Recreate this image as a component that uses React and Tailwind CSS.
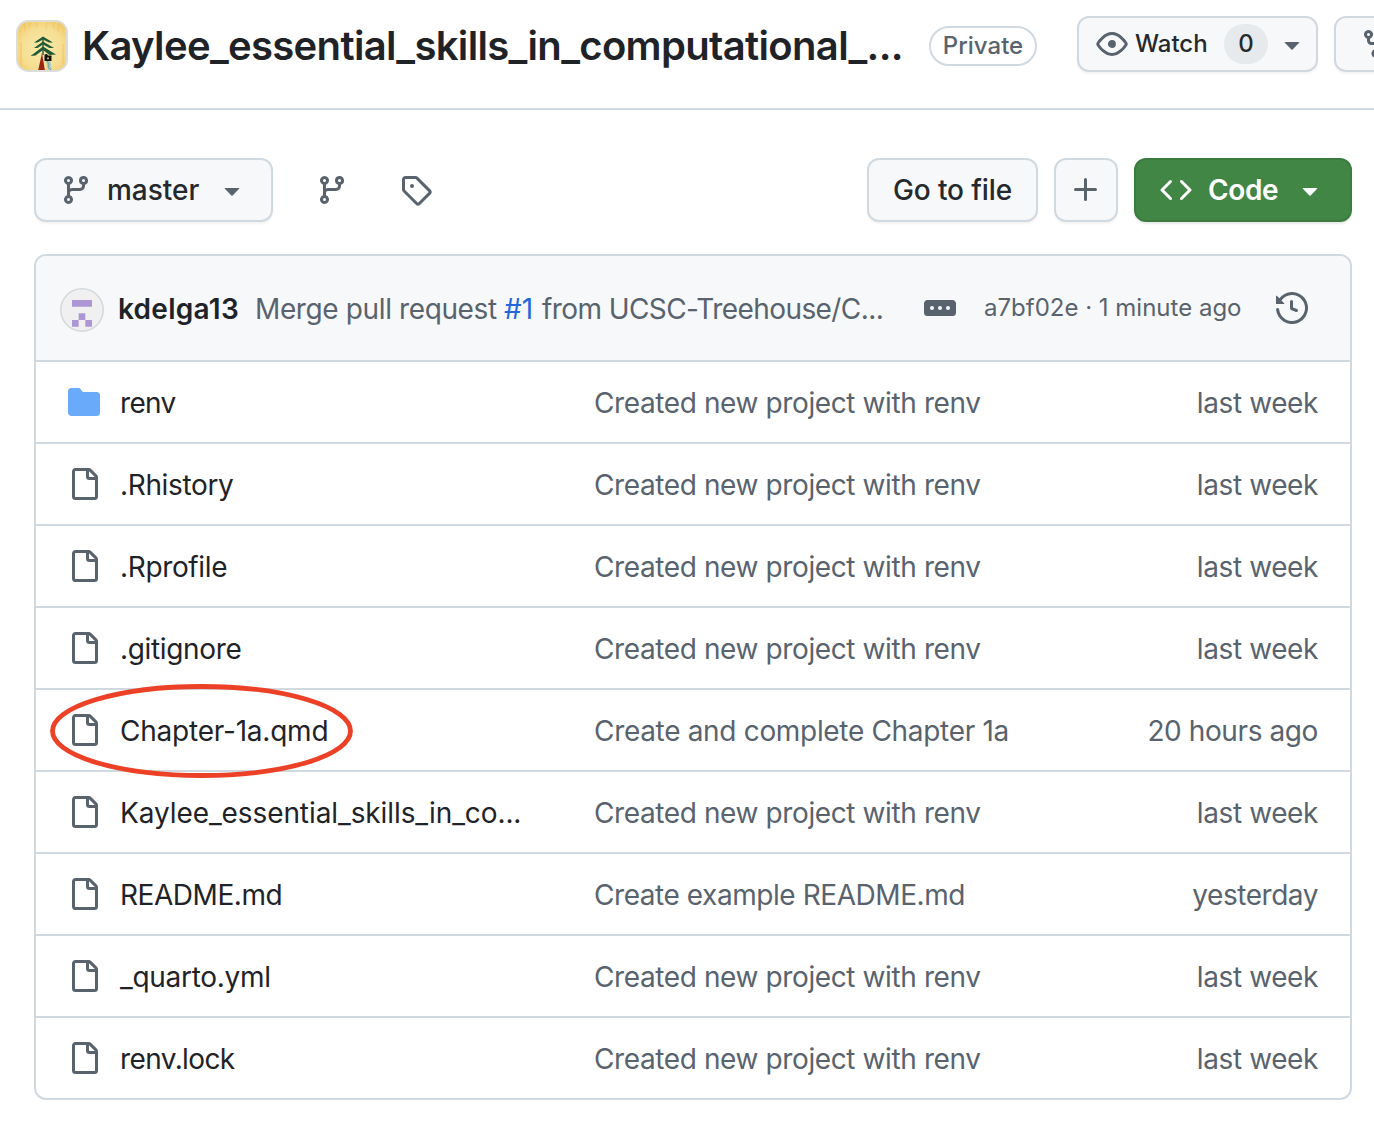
import React from "react";

const PATHS = {
  eye: "M8 2c1.981 0 3.671.992 4.933 2.078 1.27 1.091 2.187 2.345 2.637 3.023a1.62 1.62 0 0 1 0 1.798c-.45.678-1.367 1.932-2.637 3.023C11.67 13.008 9.981 14 8 14c-1.981 0-3.671-.992-4.933-2.078C1.797 10.83.88 9.576.43 8.898a1.62 1.62 0 0 1 0-1.798c.45-.677 1.367-1.931 2.637-3.022C4.33 2.992 6.019 2 8 2ZM1.679 7.932a.12.12 0 0 0 0 .136c.411.622 1.241 1.75 2.366 2.717C5.176 11.758 6.527 12.5 8 12.5c1.473 0 2.825-.742 3.955-1.715 1.124-.967 1.954-2.096 2.366-2.717a.12.12 0 0 0 0-.136c-.412-.621-1.242-1.75-2.366-2.717C10.824 4.242 9.473 3.5 8 3.5c-1.473 0-2.825.742-3.955 1.715-1.124.967-1.954 2.096-2.366 2.717ZM8 10a2 2 0 1 1-.001-3.999A2 2 0 0 1 8 10Z",
  branch: "M9.5 3.25a2.25 2.25 0 1 1 3 2.122V6A2.5 2.5 0 0 1 10 8.5H6a1 1 0 0 0-1 1v1.128a2.251 2.251 0 1 1-1.5 0V5.372a2.25 2.25 0 1 1 1.5 0v1.836A2.493 2.493 0 0 1 6 7h4a1 1 0 0 0 1-1v-.628A2.25 2.25 0 0 1 9.5 3.25Zm-6 0a.75.75 0 1 0 1.5 0 .75.75 0 0 0-1.5 0Zm8.25-.75a.75.75 0 1 0 0 1.5.75.75 0 0 0 0-1.5ZM4.25 12a.75.75 0 1 0 0 1.5.75.75 0 0 0 0-1.5Z",
  tag: "M1 7.775V2.75C1 1.784 1.784 1 2.75 1h5.025c.464 0 .91.184 1.238.513l6.25 6.25a1.75 1.75 0 0 1 0 2.474l-5.026 5.026a1.75 1.75 0 0 1-2.474 0l-6.25-6.25A1.752 1.752 0 0 1 1 7.775Zm1.5 0c0 .066.026.13.073.177l6.25 6.25a.25.25 0 0 0 .354 0l5.025-5.025a.25.25 0 0 0 0-.354l-6.25-6.25a.25.25 0 0 0-.177-.073H2.75a.25.25 0 0 0-.25.25ZM6 5a1 1 0 1 1 0 2 1 1 0 0 1 0-2Z",
  plus: "M7.75 2a.75.75 0 0 1 .75.75V7h4.25a.75.75 0 0 1 0 1.5H8.5v4.25a.75.75 0 0 1-1.5 0V8.5H2.75a.75.75 0 0 1 0-1.5H7V2.75A.75.75 0 0 1 7.75 2Z",
  code: "m11.28 3.22 4.25 4.25a.75.75 0 0 1 0 1.06l-4.25 4.25a.749.749 0 0 1-1.275-.326.749.749 0 0 1 .215-.734L13.94 8l-3.72-3.72a.749.749 0 0 1 .326-1.275.749.749 0 0 1 .734.215Zm-6.56 0a.751.751 0 0 1 1.042.018.751.751 0 0 1 .018 1.042L2.06 8l3.72 3.72a.749.749 0 0 1-.326 1.275.749.749 0 0 1-.734-.215L.47 8.53a.75.75 0 0 1 0-1.06Z",
  triangle: "m4.427 7.427 3.396 3.396a.25.25 0 0 0 .354 0l3.396-3.396A.25.25 0 0 0 11.396 7H4.604a.25.25 0 0 0-.177.427Z",
  history: "m.427 1.927 1.215 1.215a8.002 8.002 0 1 1-1.6 5.685.75.75 0 1 1 1.493-.154 6.5 6.5 0 1 0 1.18-4.458l1.358 1.358A.25.25 0 0 1 3.896 6H.25A.25.25 0 0 1 0 5.75V2.104a.25.25 0 0 1 .427-.177ZM7.75 4a.75.75 0 0 1 .75.75v2.992l2.028.812a.75.75 0 0 1-.557 1.392l-2.5-1A.751.751 0 0 1 7 8.25v-3.5A.75.75 0 0 1 7.75 4Z",
  file: "M2 1.75C2 .784 2.784 0 3.75 0h6.586c.464 0 .909.184 1.237.513l2.914 2.914c.329.328.513.773.513 1.237v9.586A1.75 1.75 0 0 1 13.25 16h-9.5A1.75 1.75 0 0 1 2 14.25Zm1.75-.25a.25.25 0 0 0-.25.25v12.5c0 .138.112.25.25.25h9.5a.25.25 0 0 0 .25-.25V6h-2.75A1.75 1.75 0 0 1 9 4.25V1.5Zm6.75.062V4.25c0 .138.112.25.25.25h2.688l-.011-.013-2.914-2.914-.013-.011Z",
  folder: "M1.75 1A1.75 1.75 0 0 0 0 2.75v10.5C0 14.216.784 15 1.75 15h12.5A1.75 1.75 0 0 0 16 13.25v-8.5A1.75 1.75 0 0 0 14.25 3H7.5a.25.25 0 0 1-.2-.1l-.9-1.2C6.07 1.26 5.55 1 5 1H1.75Z",
  ellipsis: "M0 5.75C0 4.784.784 4 1.75 4h12.5c.966 0 1.75.784 1.75 1.75v4.5A1.75 1.75 0 0 1 14.25 12H1.75A1.75 1.75 0 0 1 0 10.25ZM12 7a1 1 0 1 0 0 2 1 1 0 0 0 0-2ZM7 8a1 1 0 1 0 2 0 1 1 0 0 0-2 0ZM4 7a1 1 0 1 0 0 2 1 1 0 0 0 0-2Z",
  fork: "M5 5.372v.878c0 .414.336.75.75.75h4.5a.75.75 0 0 0 .75-.75v-.878a2.25 2.25 0 1 1 1.5 0v.878a2.25 2.25 0 0 1-2.25 2.25h-1.5v2.128a2.251 2.251 0 1 1-1.5 0V8.5h-1.5A2.25 2.25 0 0 1 3.5 6.25v-.878a2.25 2.25 0 1 1 1.5 0ZM5 3.25a.75.75 0 1 0-1.5 0 .75.75 0 0 0 1.5 0Zm6.75.75a.75.75 0 1 0 0-1.5.75.75 0 0 0 0 1.5Zm-3 8.75a.75.75 0 1 0-1.5 0 .75.75 0 0 0 1.5 0Z",
};

function Icon({ name, className = "text-[#59636e]" }) {
  return (
    <svg viewBox="0 0 16 16" className={`h-8 w-8 shrink-0 fill-current ${className}`} aria-hidden="true">
      <path d={PATHS[name]} />
    </svg>
  );
}

function Button({ className = "", children }) {
  return (
    <button
      className={`flex shrink-0 items-center rounded-xl border-2 border-[#d1d9e0] bg-[#f6f8fa] font-medium text-[#25292e] shadow-[0_2px_2px_rgba(31,35,40,0.05)] ${className}`}
    >
      {children}
    </button>
  );
}

function RepoAvatar() {
  return (
    <svg viewBox="0 0 52 52" className="h-[52px] w-[52px] shrink-0" role="img" aria-label="Treehouse">
      <defs>
        <radialGradient id="parchment" cx="50%" cy="55%" r="65%">
          <stop offset="0" stopColor="#f8e9a8" />
          <stop offset="0.6" stopColor="#f6df94" />
          <stop offset="1" stopColor="#f1c55e" />
        </radialGradient>
        <clipPath id="frame">
          <rect x="1" y="1" width="50" height="50" rx="11" />
        </clipPath>
      </defs>
      <g clipPath="url(#frame)">
        <rect width="52" height="52" fill="url(#parchment)" />
        <path d="M8 2l1 9M14 2l-1 6M20 1l1 7M31 1l-1 8M37 2l1 7M43 2l-1 10" stroke="#eab765" strokeWidth="1.2" opacity="0.4" />
        <path d="M5 22v24M47 24v20" stroke="#efc468" strokeWidth="2" opacity="0.5" />
        <path d="M26 33l-4 18h7z" fill="#9c2418" />
        <path d="M27 17v18" stroke="#2b5a38" strokeWidth="1.4" />
        <path
          d="M27 16.500l-9 6 3.500 0 5.500-3 6 3 4 0zM27 21.500l-9 6.500 3.500 0 5.500-3.500 6.500 3.500 4.500 0zM27 26.500l-12.500 9.500 5 -.5 7.500-5.500 6.500 5 6.500-.5z"
          fill="#225a35"
        />
        <path d="M30 40l4 0 2 11-4 0z" fill="#a6cbc0" />
        <path d="M31 41l2 3-1 3 3 3" fill="none" stroke="#6f9d9c" strokeWidth="0.9" />
        <path d="M28.500 34.500l2.500-.5 1 1.500 3.500 0v5.500l-7 0z" fill="#14140f" />
        <rect x="31" y="37.500" width="2" height="1.700" fill="#c9ad62" />
      </g>
      <rect x="1" y="1" width="50" height="50" rx="11.500" fill="none" stroke="#dcdcd8" strokeWidth="2" />
    </svg>
  );
}

function Identicon() {
  return (
    <svg viewBox="0 0 44 44" className="h-11 w-11 shrink-0" role="img" aria-label="kdelga13">
      <circle cx="22" cy="22" r="21.200" fill="#f0f0f0" stroke="#d6d9dc" strokeWidth="1.600" />
      <path
        d="M12 12h20v6.700H12zM18.700 25.300h6.600V32h-6.600zM12 32h6.700v6.700H12zM25.300 32H32v6.700h-6.700z"
        fill="#ad96d5"
      />
    </svg>
  );
}

const CREATED = "Created new project with renv";
const FILES = [
  { name: "renv", nameCls: "tracking-[-0.7px]", icon: "folder", msg: CREATED, when: "last week" },
  { name: ".Rhistory", nameCls: "tracking-[-0.35px]", msg: CREATED, when: "last week" },
  { name: ".Rprofile", nameCls: "tracking-[-0.35px]", msg: CREATED, when: "last week" },
  { name: ".gitignore", nameCls: "tracking-[-0.35px]", msg: CREATED, when: "last week" },
  { name: "Chapter-1a.qmd", nameCls: "tracking-[-0.22px]", circled: true, msg: "Create and complete Chapter 1a", msgCls: "tracking-[-0.32px]", when: "20 hours ago", whenCls: "tracking-[-0.4px]" },
  { name: "Kaylee_essential_skills_in_co...", nameCls: "tracking-[-0.09px]", msg: CREATED, when: "last week" },
  { name: "README.md", nameCls: "tracking-[-0.45px]", msg: "Create example README.md", msgCls: "tracking-[-0.44px]", when: "yesterday", whenCls: "tracking-[-0.46px]" },
  { name: "_quarto.yml", nameCls: "tracking-[-0.3px]", msg: CREATED, when: "last week" },
  { name: "renv.lock", nameCls: "tracking-[-0.6px]", msg: CREATED, when: "last week" },
];

function FileRow({ file }) {
  return (
    <div className="relative flex h-[82px] items-center border-b-2 border-[#d1d9e0] pr-8 pl-8 text-[28px] leading-[42px] whitespace-nowrap last:h-20 last:border-b-0">
      <Icon name={file.icon || "file"} className={file.icon ? "text-[#69abfa]" : "text-[#59636e]"} />
      <span className={`ml-5 w-[474px] shrink-0 pt-[2px] text-[#1f2328] ${file.nameCls}`}>{file.name}</span>
      <span className={`pt-[2px] text-[#59636e] ${file.msgCls || "tracking-[-0.39px]"}`}>{file.msg}</span>
      <span className={`ml-auto pt-[2px] text-[#59636e] ${file.whenCls || "tracking-[-0.4px]"}`}>{file.when}</span>
      {file.circled && (
        <svg viewBox="0 0 304 96" className="absolute top-[-7px] left-[14px] z-10 h-24 w-[304px]" aria-hidden="true">
          <ellipse cx="151.500" cy="48" rx="149" ry="44.500" fill="none" stroke="#ec4126" strokeWidth="4.800" />
        </svg>
      )}
    </div>
  );
}

export default function App() {
  return (
    <div className="h-[1126px] w-full overflow-hidden bg-white font-['Inter','Liberation_Sans',sans-serif]">
      <header className="flex h-[110px] items-start border-b-2 border-[#d1d9e0] pl-4 whitespace-nowrap">
        <div className="mt-5">
          <RepoAvatar />
        </div>
        <h1 className="mt-[22px] ml-[14px] w-[847px] shrink-0 text-[40px] leading-[48px] font-semibold tracking-[-0.66px] text-[#1f2328]">
          Kaylee_essential_skills_in_computational_...
        </h1>
        <span className="mt-[26px] flex h-10 w-[108px] shrink-0 items-center justify-center rounded-full border-2 border-[#d1d9e0] text-2xl leading-9 font-medium text-[#59636e]">
          Private
        </span>
        <Button className="mt-4 ml-10 h-14 w-[241px] pl-[17px] text-2xl">
          <Icon name="eye" />
          <span className="ml-[7px] w-[89px] text-left">Watch</span>
          <span className="flex h-10 w-11 items-center justify-center rounded-full bg-[#e7eaed]">0</span>
          <Icon name="triangle" className="ml-2 text-[#59636e]" />
        </Button>
        <Button className="mt-4 ml-4 h-14 w-[160px] pl-6">
          <Icon name="fork" />
        </Button>
      </header>

      <main className="pt-12 pr-[22px] pl-[34px]">
        <div className="flex h-16 items-center text-[28px] leading-[42px]">
          <Button className="h-16 w-[239px] pl-6">
            <Icon name="branch" />
            <span className="ml-[15px] w-[109px] text-left">master</span>
            <Icon name="triangle" />
          </Button>
          <Icon name="branch" className="ml-[43px] text-[#59636e]" />
          <Icon name="tag" className="ml-[52px] text-[#59636e]" />
          <Button className="ml-auto h-16 w-[171px] justify-center tracking-[-0.1px]">Go to file</Button>
          <Button className="ml-4 h-16 w-16 pl-[14px]">
            <Icon name="plus" />
          </Button>
          <button className="ml-4 flex h-16 w-[218px] items-center rounded-xl border-2 border-[#3b7b40] bg-[#428646] pl-6 font-semibold text-white shadow-[0_2px_2px_rgba(31,35,40,0.1)]">
            <Icon name="code" className="text-white" />
            <span className="ml-4 w-[86px] text-left tracking-[-0.4px]">Code</span>
            <Icon name="triangle" className="text-white" />
          </button>
        </div>

        <section className="mt-8 overflow-hidden rounded-xl border-2 border-[#d1d9e0]">
          <div className="flex h-[106px] items-center border-b-2 border-[#d1d9e0] bg-[#f6f8fa] pl-6 text-[28px] leading-[42px] whitespace-nowrap text-[#59636e]">
            <div className="pt-1">
              <Identicon />
            </div>
            <span className="mt-[2px] ml-[14px] w-[137px] font-semibold tracking-[0.28px] text-[#1f2328]">kdelga13</span>
            <span className="mt-[2px] w-[249px] tracking-[-0.38px]">Merge pull request</span>
            <span className="mt-[2px] w-[38px] text-[#2467dc]">#1</span>
            <span className="mt-[2px] w-[382px] tracking-[-0.58px]">from UCSC-Treehouse/C...</span>
            <Icon name="ellipsis" className="text-[#59636e]" />
            <span className="ml-[28px] w-[292px] text-2xl leading-9">a7bf02e · 1 minute ago</span>
            <Icon name="history" />
          </div>
          {FILES.map((file) => (
            <FileRow key={file.name} file={file} />
          ))}
        </section>
      </main>
    </div>
  );
}
